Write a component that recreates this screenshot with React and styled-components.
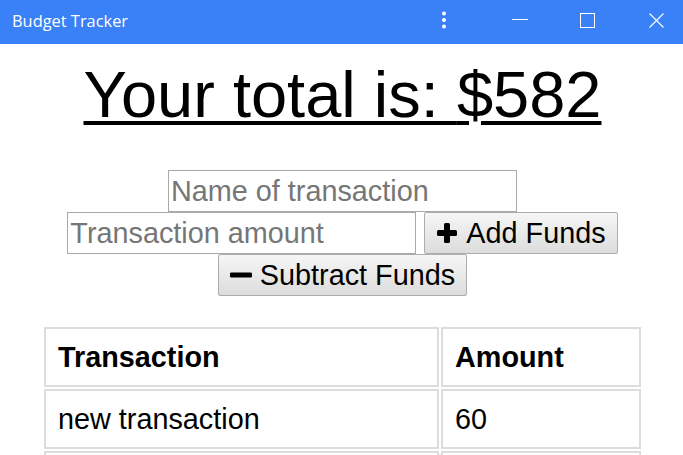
import React from "react";
import styled, { createGlobalStyle } from "styled-components";

const GlobalStyle = createGlobalStyle`
  html, body {
    margin: 0;
    padding: 0;
    background: #ffffff;
  }
  body {
    font-family: "Liberation Sans", Arial, sans-serif;
    color: #000000;
  }
`;

const transactions = [
  { name: "new transaction", value: 60 },
  { name: "groceries", value: -42 },
  { name: "paycheck", value: 564 },
];

export default function App() {
  return (
    <>
      <GlobalStyle />
      <TitleBar>
        <AppName>Budget Tracker</AppName>
        <Controls>
          <Control $gap={0} $w={4}>
            <svg width="4" height="18" viewBox="0 0 4 18">
              <circle cx="2" cy="2.5" r="2" fill="#fff" />
              <circle cx="2" cy="9" r="2" fill="#fff" />
              <circle cx="2" cy="15.5" r="2" fill="#fff" />
            </svg>
          </Control>
          <Control $gap={66} $w={16}>
            <svg width="16" height="16" viewBox="0 0 16 16">
              <line x1="0" y1="7.5" x2="16" y2="7.5" stroke="#fff" strokeWidth="1" />
            </svg>
          </Control>
          <Control $gap={52} $w={15}>
            <svg width="15" height="15" viewBox="0 0 15 15">
              <rect x="0.5" y="0.5" width="14" height="14" fill="none" stroke="#fff" strokeWidth="1" />
            </svg>
          </Control>
          <Control $gap={54} $w={15}>
            <svg width="15" height="15" viewBox="0 0 15 15">
              <path d="M0.5 0.5 L14.5 14.5 M14.5 0.5 L0.5 14.5" stroke="#fff" strokeWidth="1.1" />
            </svg>
          </Control>
        </Controls>
      </TitleBar>
      <Main>
        <Total>
          Your total is: <span>$582</span>
        </Total>
        <Form onSubmit={(e) => e.preventDefault()}>
          <Field type="text" placeholder="Name of transaction" />
          <Field type="number" placeholder="Transaction amount" />
          <Button type="button">
            <svg width="22" height="22" viewBox="0 0 22 22">
              <rect x="8" y="1" width="6" height="20" rx="1.5" fill="#000" />
              <rect x="1" y="8" width="20" height="6" rx="1.5" fill="#000" />
            </svg>
            Add Funds
          </Button>
          <Button type="button">
            <svg width="22" height="22" viewBox="0 0 22 22">
              <rect x="0" y="8.5" width="22" height="5" rx="1.2" fill="#000" />
            </svg>
            Subtract Funds
          </Button>
        </Form>
        <Table>
          <thead>
            <tr>
              <HeadCell $w={395}>Transaction</HeadCell>
              <HeadCell>Amount</HeadCell>
            </tr>
          </thead>
          <tbody>
            {transactions.map((t, i) => (
              <tr key={i}>
                <Cell>{t.name}</Cell>
                <Cell>{t.value}</Cell>
              </tr>
            ))}
          </tbody>
        </Table>
      </Main>
    </>
  );
}

const TitleBar = styled.header`
  display: flex;
  align-items: center;
  justify-content: space-between;
  height: 44px;
  padding: 0 19px 0 12px;
  background: #3a80f6;
  color: #ffffff;
`;

const AppName = styled.div`
  font-family: "Open Sans", "Noto Sans", sans-serif;
  font-size: 16.4px;
  line-height: 1;
  margin-top: -2px;
`;

const Controls = styled.div`
  display: flex;
  align-items: center;
  margin-top: -4px;
`;

const Control = styled.div`
  display: flex;
  align-items: center;
  justify-content: center;
  width: ${(p) => p.$w}px;
  margin-left: ${(p) => p.$gap}px;
  svg {
    display: block;
  }
`;

const Main = styled.main`
  padding: 0 7px 40px 9px;
  text-align: center;
`;

const Total = styled.h1`
  margin: 15px 0 0;
  font-size: 65px;
  font-weight: normal;
  line-height: 72px;
  text-decoration: underline;
  text-decoration-thickness: 4px;
  text-underline-offset: 4px;
`;

const Form = styled.form`
  display: flex;
  flex-wrap: wrap;
  justify-content: center;
  column-gap: 8px;
  margin-top: 39px;
`;

const Field = styled.input`
  box-sizing: border-box;
  width: 349px;
  height: 42px;
  margin: 0;
  padding: 0 2px;
  border: 1px solid #a9a9a9;
  font-family: "Liberation Sans", Arial, sans-serif;
  font-size: 28.8px;
  color: #000;
  background: #fff;
  outline: none;
  &::placeholder {
    color: #767676;
  }
  &::-webkit-outer-spin-button,
  &::-webkit-inner-spin-button {
    -webkit-appearance: none;
    margin: 0;
  }
  -moz-appearance: textfield;
`;

const Button = styled.button`
  box-sizing: border-box;
  display: inline-flex;
  align-items: center;
  gap: 8px;
  height: 42px;
  margin: 0;
  padding: 0 11px;
  border: 1px solid #adadad;
  border-radius: 2px;
  background: linear-gradient(to bottom, #f6f6f6 0%, #e9e9e9 50%, #dcdcdc 100%);
  font-family: "Liberation Sans", Arial, sans-serif;
  font-size: 28.8px;
  color: #000;
  cursor: pointer;
  svg {
    display: block;
    flex: none;
  }
`;

const Table = styled.table`
  width: 601px;
  margin: 29px auto 0;
  border-collapse: separate;
  border-spacing: 2px;
  table-layout: fixed;
  font-size: 28.8px;
`;

const HeadCell = styled.th`
  box-sizing: border-box;
  width: ${(p) => (p.$w ? `${p.$w}px` : "auto")};
  padding: 12px;
  border: 2px solid #dddddd;
  text-align: left;
  font-weight: bold;
  line-height: 32px;
`;

const Cell = styled.td`
  box-sizing: border-box;
  padding: 12px;
  border: 2px solid #dddddd;
  text-align: left;
  line-height: 32px;
`;
